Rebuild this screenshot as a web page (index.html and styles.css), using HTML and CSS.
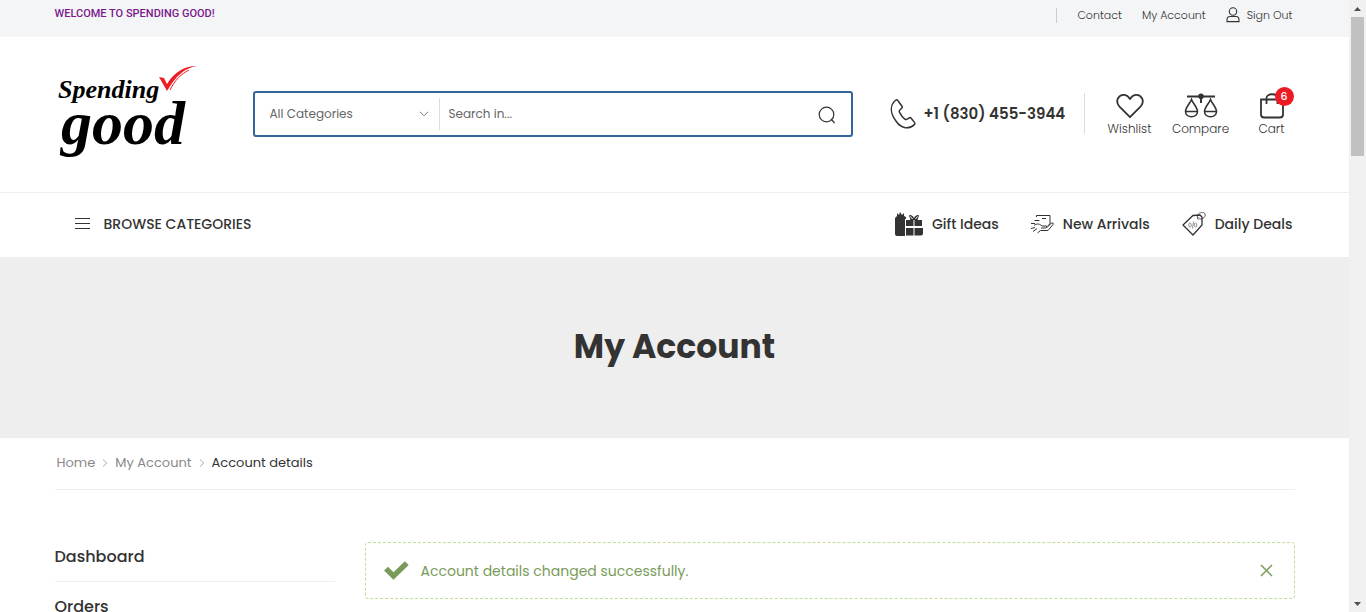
FILE: index.html
```html
<!DOCTYPE html>
<html lang="en">
<head>
<meta charset="utf-8">
<meta name="viewport" content="width=device-width, initial-scale=1">
<title>My Account - Spending Good</title>
<link rel="stylesheet" href="styles.css">
</head>
<body>
<div class="page">
  <div class="topbar">
    <div class="container topbar-row">
      <p class="welcome">WELCOME TO SPENDING GOOD!</p>
      <nav class="top-links" aria-label="Account">
        <a href="#contact">Contact</a>
        <a href="#account">My Account</a>
        <a class="signout" href="#signout">
          <svg width="14" height="16" viewBox="0 0 14 16" fill="none" stroke="#333" stroke-width="1.1"><circle cx="7" cy="4.5" r="3.7"/><path d="M1 14.6v-1.8c0-2 1.2-3.3 3-3.3h6c1.800 0 3 1.300 3 3.300v1.800z"/></svg>
          <span>Sign Out</span>
        </a>
      </nav>
    </div>
  </div>

  <header class="header">
    <div class="container header-row">
      <a class="logo" href="#home" aria-label="Spending Good">
        <svg width="145" height="104" viewBox="0 0 145 104">
          <text class="logo-small" x="3" y="36">Spending</text>
          <text class="logo-big" x="6" y="82">good</text>
          <path fill="#ed1c24" d="M104 15l5 1 3 6C119 11 128 4 142 4c-13 2-21 10-30 25z"/>
          <path fill="none" stroke="#ed1c24" stroke-width="1" d="M115 28c5-10 11-16 19-20"/>
        </svg>
      </a>
      <form class="search" role="search">
        <div class="category">
          <select aria-label="Category"><option>All Categories</option></select>
          <svg class="chevron" width="10" height="6" viewBox="0 0 10 6" fill="none" stroke="#777"><path d="M1 .8l4 4 4-4"/></svg>
        </div>
        <input type="text" placeholder="Search in..." aria-label="Search in">
        <button type="button" aria-label="Search">
          <svg width="18" height="18" viewBox="0 0 18 18" fill="none" stroke="#333" stroke-width="1.200"><circle cx="8.500" cy="8.500" r="7.300"/><path d="M13 13l3.600 4"/></svg>
        </button>
      </form>
      <a class="phone" href="tel:+18304553944">
        <svg width="26" height="30" viewBox="0 0 26 30" fill="none" stroke="#333" stroke-width="1.500" stroke-linejoin="round"><path d="M7.600 1.200L12 7.200q.8 1.100-.3 2L10 10.800q-1.300 1-.3 2.800 2.200 4.200 4.800 6.200 1.500 1.200 2.700.4l2-1.300q1.200-.7 2 .4l3.400 4.300q.8 1-.3 2c-5 5-12.800 4.200-17.800-2.800C1.500 16.200-1.500 7.400 5.600 1.300q1.200-.9 2-.1z"/></svg>
        <span>+1 (830) 455-3944</span>
      </a>
      <nav class="actions" aria-label="Shop">
        <a href="#wishlist">
          <svg width="28" height="26" viewBox="0 0 28 26" fill="none" stroke="#333" stroke-width="1.800" stroke-linejoin="round"><path d="M14 24.200L3.500 13.700C-1.800 7.500 3.300 1.300 8.300 1.900c2.700.3 4.500 2.200 5.700 4.100 1.200-1.900 3-3.800 5.700-4.100 5-.6 10.100 5.600 4.800 11.800z"/></svg>
          <span>Wishlist</span>
        </a>
        <a href="#compare">
          <svg width="34" height="26" viewBox="0 0 34 26" fill="none" stroke="#333" stroke-width="1.600"><path d="M3 3.500h28M17 1v9" stroke-width="2"/><circle cx="17" cy="3.200" r="2" fill="#333"/><path d="M7.500 6.500C6 10.500 1.500 14.500 1.500 18.500c0 7 12 7 12 0 0-4-4.500-8-6-12zM26.500 6.500c-1.500 4-6 8-6 12 0 7 12 7 12 0 0-4-4.500-8-6-12zM1.500 18.500h12M20.500 18.500h12"/></svg>
          <span>Compare</span>
        </a>
        <a class="cart" href="#cart">
          <svg width="26" height="26" viewBox="0 0 26 26" fill="none" stroke="#333" stroke-width="1.800"><path d="M2 6.500h22v15q0 3-3 3H5q-3 0-3-3zM7.500 11V5c0-5 11-5 11 0v6"/></svg>
          <span>Cart</span>
          <b class="badge">6</b>
        </a>
      </nav>
    </div>
  </header>

  <div class="navbar">
    <div class="container nav-row">
      <button class="browse" type="button">
        <svg width="15" height="12" viewBox="0 0 15 12" stroke="#333" stroke-width="1"><path d="M0 .5h15M0 5.500h15M0 10.500h15"/></svg>
        <span>BROWSE CATEGORIES</span>
      </button>
      <nav class="nav-links" aria-label="Featured">
        <a href="#gifts">
          <svg width="28" height="24" viewBox="0 0 28 24"><path fill="#333" d="M0 22V6l2-2V1l2 2 1-3 2 3 2-2v3l2 1v2l-1 17H2q-2 0-2-2zM11 8h4.500C11.500 3 16 1 19 6c3-5 7.500-3 3.500 2H27v6h-7.500V8h-1v6H11zM11 16h7.500v7.500H11zM19.500 16H28v5.500q0 2-2 2h-6.500z"/><path stroke="#fff" stroke-width="1" fill="none" d="M10.500 7v17M14.500 7c-1-2.500 1-3.500 3 0M20.500 7c2-3.500 4-2.500 3 0"/></svg>
          <span>Gift Ideas</span>
        </a>
        <a href="#new">
          <svg width="23" height="22" viewBox="0 0 23 22" fill="none" stroke="#333" stroke-width="1"><path d="M5.500 4V2.500h13.500V11l-2.500 2M11 5.500h4M3.500 7.500h5M0 10.500h4M3 12.500c3-2.500 6-1.500 8 .5h4.500q1 2-1 2H10M16 14.500l4.500-4.500q2.500-.5 1.500 1.500L17 17.500H9.500L6.500 20M0 15.500l4-1M2 18.500l4-3" stroke-width="1"/></svg>
          <span>New Arrivals</span>
        </a>
        <a href="#deals">
          <svg width="24" height="24" viewBox="0 0 24 24" fill="none" stroke="#333" stroke-width="1"><path d="M1 13L11 3.500l7-.5 2 2v8L11 23z" stroke-width="1.300"/><path d="M16 7C13 2 21-2 23 2c1 3-2 5-5 5" stroke-width=".8"/><g stroke="#777" stroke-width=".8"><circle cx="16.500" cy="6.500" r="1"/><ellipse cx="8" cy="13" rx="1.300" ry="2"/><ellipse cx="13.500" cy="13" rx="1.300" ry="2"/><path d="M11.500 9.500l-1 7"/></g></svg>
          <span>Daily Deals</span>
        </a>
      </nav>
    </div>
  </div>

  <div class="banner"><h1>My Account</h1></div>

  <main class="container">
    <nav class="crumbs" aria-label="Breadcrumb">
      <a href="#home">Home</a>
      <svg width="6" height="8" viewBox="0 0 6 8" fill="none" stroke="#aaa"><path d="M1 .5L4.800 4 1 7.500"/></svg>
      <a href="#account">My Account</a>
      <svg width="6" height="8" viewBox="0 0 6 8" fill="none" stroke="#aaa"><path d="M1 .5L4.800 4 1 7.500"/></svg>
      <span class="current">Account details</span>
    </nav>
    <div class="account">
      <nav class="side" aria-label="My account">
        <a href="#dashboard">Dashboard</a>
        <a href="#orders">Orders</a>
      </nav>
      <div class="alert" role="status">
        <svg width="25" height="19" viewBox="0 0 25 19" fill="#799b5a"><path d="M0 9.500l4-3.700 5.500 5.400L20.800.2 24.700 4 9.500 18.800z"/></svg>
        <span>Account details changed successfully.</span>
        <button type="button" aria-label="Dismiss">
          <svg width="13" height="13" viewBox="0 0 13 13" stroke="#799b5a" stroke-width="1.500"><path d="M1 1l11 11M12 1L1 12"/></svg>
        </button>
      </div>
    </div>
  </main>
</div>
<div class="scrollbar" aria-hidden="true">
  <svg width="17" height="17" viewBox="0 0 17 17" fill="#505050"><path d="M5 11l3.500-4 3.500 4z"/></svg>
  <div class="thumb"></div>
  <svg width="17" height="17" viewBox="0 0 17 17" fill="#505050"><path d="M5 7l3.500 4L12 7z"/></svg>
</div>
</body>
</html>
```

FILE: styles.css
```css
* { box-sizing: border-box; }

body {
  margin: 0;
  display: flex;
  height: 100vh;
  overflow: hidden;
  background: #fff;
  color: #333;
  font: 13px/20px Poppins, Inter, "Open Sans", sans-serif;
}

a { color: inherit; text-decoration: none; }
svg { display: block; flex: none; }
button { border: 0; padding: 0; background: none; color: inherit; font: inherit; cursor: pointer; }

.page { flex: 1; min-width: 0; overflow: hidden; }
.container { max-width: 1240px; margin: 0 auto; }

.topbar { background: #f4f5f7; font-size: 11px; }
.topbar-row { display: flex; justify-content: space-between; height: 37px; padding-top: 4px; }
.welcome { margin: 0; color: #7a1a8c; font-family: Roboto, sans-serif; font-weight: 500; }
.top-links { display: flex; align-items: center; gap: 20px; height: 22px; padding-right: 2px; font-weight: 300; }
.top-links::before { content: ""; width: 1px; height: 15px; background: #ccc; }
.signout { display: flex; align-items: center; gap: 7px; }

.header { border-bottom: 1px solid #eee; }
.header-row { display: flex; align-items: center; height: 155px; padding-bottom: 2px; }
.logo { width: 145px; margin-right: 53px; }
.logo-small, .logo-big { fill: #000; font-family: "Liberation Serif", serif; font-style: italic; font-weight: 700; }
.logo-small { font-size: 26px; }
.logo-big { font-size: 62px; }

.search { flex: 1; display: flex; align-items: center; height: 46px; border: 2px solid #336699; border-radius: 3px; font-size: 12px; }
.category { position: relative; width: 185px; height: 32px; border-right: 1px solid #ddd; }
.category select { appearance: none; width: 100%; height: 100%; padding: 0 24px 0 15px; border: 0; background: none; color: #666; font: inherit; }
.chevron { position: absolute; right: 10px; top: 13px; pointer-events: none; }
.search input { flex: 1; min-width: 0; height: 32px; padding: 0 9px; border: 0; outline: 0; background: none; font: inherit; }
.search input::placeholder { color: #666; opacity: 1; }
.search button { padding: 3px 15px 0; }

.phone { display: flex; align-items: center; gap: 8px; width: 172px; margin: 0 22px 0 37px; font-size: 15px; font-weight: 600; white-space: nowrap; }
.actions { display: flex; gap: 25px; height: 41px; padding-left: 22px; border-left: 1px solid #ddd; font-size: 12px; font-weight: 300; line-height: 20px; }
.actions a { position: relative; display: flex; flex-direction: column; align-items: center; width: 46px; }
.badge { position: absolute; top: -6px; right: 1px; width: 19px; height: 19px; border-radius: 50%; background: #ed1c24; color: #fff; font-size: 11px; font-weight: 500; line-height: 19px; text-align: center; }

.nav-row { display: flex; align-items: center; justify-content: space-between; height: 64px; padding: 0 2px 2px 20px; font-size: 14px; font-weight: 500; }
.browse { display: flex; align-items: center; gap: 14px; }
.nav-links { display: flex; gap: 32px; }
.nav-links a { display: flex; align-items: center; gap: 9px; }

.banner { display: grid; place-items: center; height: 181px; padding-bottom: 2px; background: #eee; }
h1 { margin: 0; font-size: 33px; line-height: 40px; font-weight: 700; }

.crumbs { display: flex; align-items: center; gap: 7px; height: 52px; padding: 0 2px 2px; border-bottom: 1px solid #eee; color: #888; }
.crumbs .current { color: #333; }

.account { display: grid; grid-template-columns: 280px 1fr; align-items: start; gap: 30px; padding-top: 52px; }
.side { padding-top: 5px; font-size: 16px; font-weight: 500; line-height: 20px; }
.side a { display: block; margin-bottom: 15px; padding-bottom: 14px; border-bottom: 1px solid #eee; }
.alert { display: flex; align-items: center; gap: 12px; height: 57px; padding: 0 21px 0 18px; border: 1px dashed #c0de98; border-radius: 3px; color: #799b5a; font-size: 14px; }
.alert button { margin-left: auto; }

.scrollbar { display: flex; flex-direction: column; width: 17px; background: #f1f1f1; }
.thumb { width: 13px; height: 139px; margin: 0 2px auto; background: #c1c1c1; }
```
